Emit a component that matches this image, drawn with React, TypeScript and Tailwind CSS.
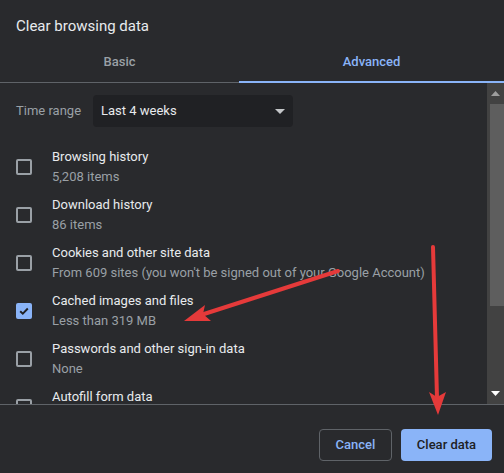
import React from 'react';

type Item = {
  title: string;
  sub?: string;
  checked?: boolean;
};

const items: Item[] = [
  { title: 'Browsing history', sub: '5,208 items' },
  { title: 'Download history', sub: '86 items' },
  { title: 'Cookies and other site data', sub: "From 609 sites (you won't be signed out of your Google Account)" },
  { title: 'Cached images and files', sub: 'Less than 319 MB', checked: true },
  { title: 'Passwords and other sign-in data', sub: 'None' },
  { title: 'Autofill form data' },
];

const Checkbox: React.FC<{ checked?: boolean }> = ({ checked }) =>
  checked ? (
    <div className="w-4 h-4 rounded-[2px] bg-[#8ab4f8] flex items-center justify-center shrink-0">
      <svg width="12" height="12" viewBox="0 0 12 12">
        <path d="M2.2 6.2 L4.8 8.7 L9.8 3.5" fill="none" stroke="#202124" strokeWidth="1.9" />
      </svg>
    </div>
  ) : (
    <div className="w-4 h-4 rounded-[2px] border-2 border-[#9aa0a6] shrink-0" />
  );

const ArrowOverlay: React.FC = () => (
  <svg className="absolute inset-0 pointer-events-none" width="504" height="473" viewBox="0 0 504 473">
    {/* arrow pointing at cached images */}
    <line x1="338" y1="271" x2="204" y2="314" stroke="#e53a3a" strokeWidth="4" strokeLinecap="round" />
    <path d="M184 321 L205 305 L203 314 L211 321 Z" fill="#e53a3a" />
    {/* arrow pointing at clear data */}
    <line x1="433" y1="247" x2="437" y2="398" stroke="#e53a3a" strokeWidth="4" strokeLinecap="round" />
    <path d="M438 415 L429 392 L437 397 L446 392 Z" fill="#e53a3a" />
  </svg>
);

export default function App() {
  return (
    <div
      className="relative w-[504px] h-[473px] bg-[#292a2d] overflow-hidden flex flex-col text-[#e8eaed]"
      style={{ fontFamily: 'Roboto, "Liberation Sans", sans-serif' }}
    >
      {/* Title */}
      <div className="h-[40px] pl-4 pt-[16px] text-[15px] leading-[20px]">Clear browsing data</div>

      {/* Tabs */}
      <div className="relative h-[43px] flex border-b border-[#5f6368] text-[13px] font-medium">
        <div className="w-[239px] flex items-center justify-center text-[#9aa0a6] pt-[2px]">Basic</div>
        <div className="flex-1 flex items-center justify-center text-[#8ab4f8] pt-[2px] relative">
          Advanced
          <div className="absolute left-0 right-0 bottom-[-1px] h-[2px] bg-[#8ab4f8]" />
        </div>
      </div>

      {/* Scroll area */}
      <div className="h-[322px] flex border-b border-[#5f6368] overflow-hidden">
        <div className="flex-1 overflow-hidden">
          <div className="flex items-center pl-4 pt-3 mb-[16px]">
            <span className="text-[13px] text-[#9aa0a6] w-[77px]">Time range</span>
            <div className="w-[200px] h-8 rounded-[4px] bg-[#202124] flex items-center justify-between pl-2 pr-[8px]">
              <span className="text-[13px] text-[#e8eaed]">Last 4 weeks</span>
              <svg width="10" height="5" viewBox="0 0 10 5">
                <path d="M0 0 L10 0 L5 5 Z" fill="#c4c7c9" />
              </svg>
            </div>
          </div>
          {items.map((item) => (
            <div key={item.title} className="h-12 flex items-center pl-4">
              <Checkbox checked={item.checked} />
              <div className="ml-5 flex flex-col text-[13px] leading-[20px] whitespace-nowrap">
                <span className="text-[#e8eaed]">{item.title}</span>
                <span className="text-[#9aa0a6] h-5">{item.sub}</span>
              </div>
            </div>
          ))}
        </div>
        {/* Scrollbar */}
        <div className="w-[17px] bg-[#424242] flex flex-col items-center">
          <div className="h-[21px] flex items-center justify-center">
            <svg width="9" height="5" viewBox="0 0 9 5">
              <path d="M0 5 L9 5 L4.5 0 Z" fill="#9e9e9e" />
            </svg>
          </div>
          <div className="w-[14px] h-[202px] bg-[#5e5e5e] ml-[2px]" />
          <div className="flex-1" />
          <div className="h-[21px] flex items-center justify-center">
            <svg width="9" height="5" viewBox="0 0 9 5">
              <path d="M0 0 L9 0 L4.5 5 Z" fill="#ffffff" />
            </svg>
          </div>
        </div>
      </div>

      {/* Footer */}
      <div className="flex justify-end gap-[9px] pt-6 pr-3 text-[13px] font-medium">
        <button className="w-[73px] h-8 rounded-[4px] border border-[#5f6368] text-[#8ab4f8]">Cancel</button>
        <button className="w-[91px] h-8 rounded-[4px] bg-[#8ab4f8] text-[#202124]">Clear data</button>
      </div>

      <ArrowOverlay />
    </div>
  );
}
